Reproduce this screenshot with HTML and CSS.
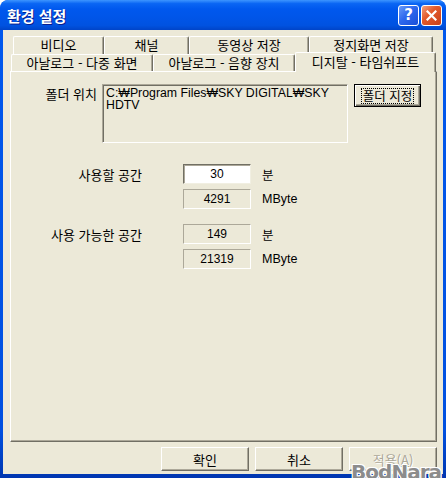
FILE: index.html
```html
<!DOCTYPE html>
<html lang="ko">
<head>
    <meta charset="UTF-8">
    <title>환경 설정</title>
    <link rel="stylesheet" href="styles.css">
</head>
<body>
    <div class="window">
        <div class="titlebar">
            <span class="title">환경 설정</span>
            <div class="caption-buttons">
                <span class="cap-btn help">?</span>
                <span class="cap-btn close">
                    <svg width="11" height="11" viewBox="0 0 11 11">
                        <path d="M1.5 1.5 L9.5 9.5 M9.5 1.5 L1.5 9.5" stroke="#fff" stroke-width="2.2" stroke-linecap="square"/>
                    </svg>
                </span>
            </div>
        </div>

        <div class="client">
            <div class="tabs">
                <div class="tab-row back">
                    <div class="tab tab-video">비디오</div>
                    <div class="tab tab-channel">채널</div>
                    <div class="tab tab-movie">동영상 저장</div>
                    <div class="tab tab-still">정지화면 저장</div>
                </div>
                <div class="tab-row front">
                    <div class="tab tab-multi">아날로그 - 다중 화면</div>
                    <div class="tab tab-audio">아날로그 - 음향 장치</div>
                    <div class="tab tab-digital selected">디지탈 - 타임쉬프트</div>
                </div>
            </div>

            <div class="panel">
                <div class="folder-row">
                    <span class="folder-label">폴더 위치</span>
                    <div class="path-box">C:₩Program Files₩SKY DIGITAL₩SKY<br>HDTV</div>
                    <button class="btn folder-btn"><span class="focus">폴더 지정</span></button>
                </div>

                <div class="space-grid">
                    <span class="space-label">사용할 공간</span>
                    <div class="field edit">30</div>
                    <span class="unit">분</span>
                    <span></span>
                    <div class="field readonly">4291</div>
                    <span class="unit">MByte</span>
                </div>

                <div class="space-grid second">
                    <span class="space-label">사용 가능한 공간</span>
                    <div class="field readonly">149</div>
                    <span class="unit">분</span>
                    <span></span>
                    <div class="field readonly">21319</div>
                    <span class="unit">MByte</span>
                </div>
            </div>

            <div class="dialog-buttons">
                <button class="btn">확인</button>
                <button class="btn">취소</button>
                <button class="btn disabled">적용(<u>A</u>)</button>
            </div>
        </div>

        <span class="watermark">BodNara</span>
    </div>
</body>
</html>
```

FILE: styles.css
```css
body {
    margin: 0;
    padding: 0;
    background: #ffffff;
    font-family: 'Liberation Sans', 'Noto Sans CJK KR', sans-serif;
    font-size: 12px;
    color: #000000;
}

.window {
    position: relative;
    width: 446px;
    height: 478px;
    box-sizing: border-box;
    background: linear-gradient(to bottom, #0058ee 0%, #0050e0 90%, #0036b0 100%);
    border-radius: 8px 8px 0 0;
    overflow: hidden;
}

/* title bar */
.titlebar {
    height: 30px;
    display: flex;
    align-items: center;
    justify-content: space-between;
    padding: 0 4px 0 7px;
    background: linear-gradient(to bottom, #3d95ff 0%, #0a66f4 12%, #0058ee 30%, #0055e8 60%, #0052e0 85%, #0044c8 100%);
    border-radius: 8px 8px 0 0;
}

.title {
    font-family: 'Noto Sans CJK KR', sans-serif;
    font-weight: 700;
    font-size: 15px;
    color: #ffffff;
    text-shadow: 1px 1px 0 #0a1e8c;
}

.caption-buttons {
    display: flex;
    gap: 2px;
}

.cap-btn {
    width: 21px;
    height: 21px;
    box-sizing: border-box;
    border: 1px solid #ffffff;
    border-radius: 3px;
    display: flex;
    align-items: center;
    justify-content: center;
}

.cap-btn.help {
    background: linear-gradient(135deg, #6a9cf8 0%, #2d68ee 45%, #1a4fd8 100%);
    color: #ffffff;
    font-family: 'DejaVu Sans', sans-serif;
    font-weight: 700;
    font-size: 15px;
}

.cap-btn.close {
    background: linear-gradient(135deg, #f0a080 0%, #e35a2c 40%, #c8401a 100%);
}

/* client area */
.client {
    margin: 0 3px;
    height: 444px;
    background: #ece9d8;
    display: flex;
    flex-direction: column;
}

/* tabs */
.tabs {
    margin-top: 6px;
}

.tab-row {
    display: flex;
}

.tab-row.back {
    margin-left: 10px;
    height: 18px;
}

.tab-row.front {
    margin-left: 8px;
    height: 17px;
    align-items: flex-start;
}

.tab {
    box-sizing: border-box;
    height: 100%;
    background: #ece9d8;
    border-top: 1px solid #ffffff;
    border-left: 1px solid #ffffff;
    border-right: 1px solid #716f64;
    box-shadow: inset -1px 0 #aca899;
    border-radius: 2px 2px 0 0;
    text-align: center;
    font-family: 'Noto Sans CJK KR', sans-serif;
    font-size: 13px;
    line-height: 16px;
    white-space: nowrap;
}

.tab-video { width: 91px; }
.tab-channel { width: 85px; }
.tab-movie { width: 120px; }
.tab-still { width: 124px; }
.tab-multi { width: 142px; }
.tab-audio { width: 142px; }
.tab-digital { width: 141px; }

.tab.selected {
    height: 20px;
    margin-top: -2px;
    position: relative;
    z-index: 1;
    line-height: 18px;
}

/* main panel */
.panel {
    margin-left: 7px;
    width: 427px;
    height: 371px;
    box-sizing: border-box;
    border: 1px solid;
    border-color: #ffffff #716f64 #716f64 #ffffff;
    box-shadow: inset -1px -1px #aca899;
    padding-top: 12px;
}

.folder-row {
    display: flex;
    align-items: flex-start;
}

.folder-label {
    width: 86px;
    text-align: right;
    padding-top: 2px;
    margin-right: 5px;
    font-family: 'Noto Sans CJK KR', sans-serif;
    font-size: 13px;
    line-height: 15px;
}

.path-box {
    width: 246px;
    height: 59px;
    box-sizing: border-box;
    border: 1px solid;
    border-color: #aca899 #ffffff #ffffff #aca899;
    box-shadow: inset 1px 1px #716f64;
    padding: 2px 0 0 3px;
    line-height: 12px;
    font-size: 12.3px;
}

.btn {
    width: 88px;
    height: 24px;
    box-sizing: border-box;
    background: #ece9d8;
    border: 1px solid;
    border-color: #ffffff #716f64 #716f64 #ffffff;
    box-shadow: inset -1px -1px #aca899;
    font-family: 'Noto Sans CJK KR', sans-serif;
    font-size: 13px;
    color: #000000;
    padding: 0;
}

.folder-btn {
    width: 67px;
    height: 23px;
    margin-left: 6px;
    border: 1px solid #000000;
    box-shadow: inset 1px 1px #ffffff, inset -1px -1px #716f64, inset -2px -2px #aca899;
    font-size: 12.5px;
}

.focus {
    display: inline-block;
    border: 1px dotted #000000;
    padding: 0 1px;
    line-height: 14px;
}

/* space settings */
.space-grid {
    display: grid;
    grid-template-columns: 131px 109px auto;
    grid-auto-rows: 20px;
    row-gap: 5px;
    align-items: center;
    margin-top: 21px;
}

.space-grid.second {
    margin-top: 15px;
}

.space-label {
    text-align: right;
    font-family: 'Noto Sans CJK KR', sans-serif;
    font-size: 13px;
}

.space-grid .field {
    margin-left: 41px;
}

.field {
    width: 68px;
    height: 20px;
    box-sizing: border-box;
    text-align: center;
    line-height: 18px;
}

.field.edit {
    background: #ffffff;
    border: 1px solid;
    border-color: #716f64 #f1efe2 #f1efe2 #716f64;
    box-shadow: inset 1px 1px #aca899;
}

.field.readonly {
    background: #ece9d8;
    border: 1px solid;
    border-color: #aca899 #ffffff #ffffff #aca899;
}

.unit {
    margin-left: 11px;
    font-family: 'Liberation Sans', 'Noto Sans CJK KR', sans-serif;
    font-size: 12.5px;
}

/* bottom buttons */
.dialog-buttons {
    display: flex;
    justify-content: flex-end;
    gap: 6px;
    margin-top: 5px;
    padding-right: 6px;
}

.btn.disabled {
    color: #aca899;
    text-shadow: 1px 1px 0 #ffffff;
}

.watermark {
    position: absolute;
    right: 5px;
    bottom: -6px;
    font-family: 'DejaVu Sans', sans-serif;
    font-weight: 700;
    font-size: 20px;
    color: #8c8c8c;
    text-shadow: -1px -1px 0 #ffffff, 1px -1px 0 #ffffff, -1px 1px 0 #ffffff, 1px 1px 0 #ffffff;
    letter-spacing: -1px;
}
```
